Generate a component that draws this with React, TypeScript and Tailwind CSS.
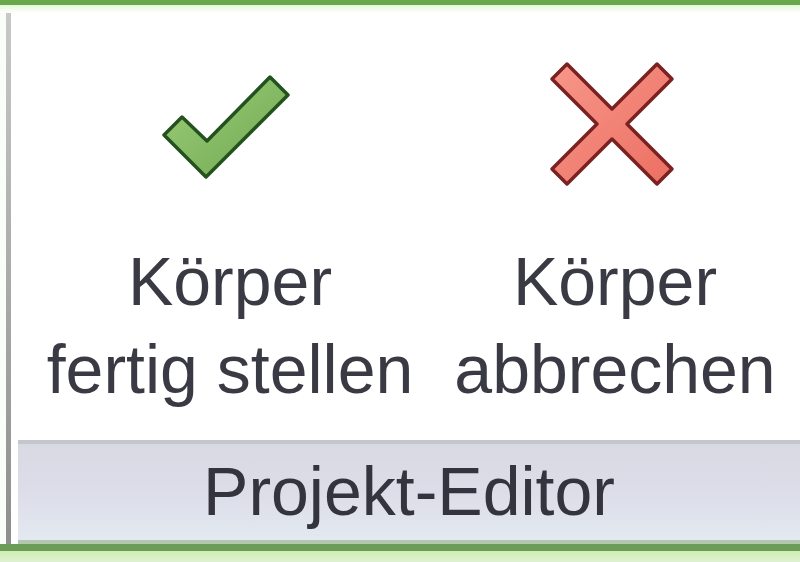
import React from 'react';

const textFont = { fontFamily: '"Liberation Sans", Arial, sans-serif' };

function CheckIcon() {
  return (
    <svg width="140" height="130" viewBox="0 0 140 130" className="mt-[48px]">
      <defs>
        <linearGradient id="checkFill" x1="0" y1="0" x2="1" y2="1">
          <stop offset="0" stopColor="#9fcd7c" />
          <stop offset="1" stopColor="#6ea94e" />
        </linearGradient>
      </defs>
      <polygon
        points="22,56 47,80 110,16 128,34 46,116 4,74"
        fill="url(#checkFill)"
        stroke="#24521f"
        strokeWidth="3.5"
        strokeLinejoin="round"
      />
    </svg>
  );
}

function CrossIcon() {
  return (
    <svg width="140" height="130" viewBox="0 0 140 130" className="mt-[48px]">
      <defs>
        <linearGradient id="crossFill" x1="0" y1="0" x2="1" y2="1">
          <stop offset="0" stopColor="#f7978a" />
          <stop offset="1" stopColor="#ec6f62" />
        </linearGradient>
      </defs>
      <polygon
        points="7,18 22,3 67,48 112,3 127,18 82,63 127,108 112,123 67,78 22,123 7,108 52,63"
        fill="url(#crossFill)"
        stroke="#7a2222"
        strokeWidth="3.5"
        strokeLinejoin="round"
      />
    </svg>
  );
}

export default function App() {
  return (
    <div className="w-[800px] h-[562px] bg-white flex flex-col overflow-hidden" style={textFont}>
      {/* top green border */}
      <div className="h-[5px] bg-[#6aa84c]" />
      <div className="h-[8px] bg-gradient-to-b from-[#e6f7d6] to-white" />

      <div className="flex flex-1">
        {/* left edge */}
        <div className="w-[6px] bg-[#fbfdf8]" />
        <div className="w-[5px] bg-gradient-to-b from-[#c8c8c8] to-[#8e8e8e]" />
        <div className="w-[7px] bg-white" />

        <div className="flex-1 flex flex-col">
          {/* buttons */}
          <div className="h-[427px] flex text-[68px] leading-[88px] text-[#3a3a44]">
            <div className="w-[424px] flex flex-col items-center">
              <CheckIcon />
              <div className="mt-[46px] text-center whitespace-nowrap">
                <div>Körper</div>
                <div>fertig stellen</div>
              </div>
            </div>
            <div className="w-[346px] flex flex-col items-center">
              <CrossIcon />
              <div className="mt-[46px] text-center whitespace-nowrap">
                <div>Körper</div>
                <div>abbrechen</div>
              </div>
            </div>
          </div>

          {/* panel label bar */}
          <div className="h-[100px] border-t-4 border-[#c5c6cd] bg-gradient-to-b from-[#d8d9e3] via-[#dcdde8] to-[#e3e9f1] pt-[3px] text-center text-[68px] leading-[88px] text-[#34343e]">
            Projekt-Editor
          </div>
          <div className="h-[4px] bg-[#b4c6b0]" />
        </div>
      </div>

      {/* bottom green border */}
      <div className="h-[7px] bg-[#6b9d58]" />
      <div className="h-[11px] bg-gradient-to-b from-[#cdf0b4] to-[#dff0d2]" />
    </div>
  );
}
